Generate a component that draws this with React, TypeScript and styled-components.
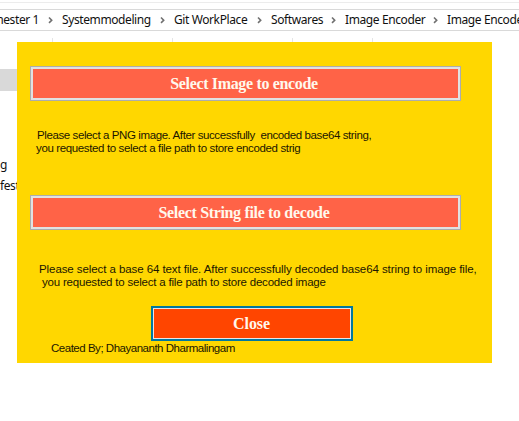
import React from "react";
import styled, { createGlobalStyle } from "styled-components";

const GlobalStyle = createGlobalStyle`
  * { box-sizing: border-box; }
  body { margin: 0; background: #fff; overflow: hidden; }
`;

const Desktop = styled.main`
  position: relative;
  width: 519px;
  height: 421px;
  overflow: hidden;
  background: #fff;
  font-family: "Noto Sans", sans-serif;
  font-size: 12px;
  color: #111;
`;

const RibbonEdge = styled.div`
  height: 9px;
  padding-top: 2px;
  &::before { content: ""; display: block; height: 1px; background: #ececec; }
`;

const AddressBar = styled.nav`
  display: flex;
  align-items: center;
  height: 22px;
  border-top: 1px solid #d9d9d9;
  border-bottom: 1px solid #d9d9d9;
`;

const Crumb = styled.span<{ $width: number; $end?: boolean }>`
  display: flex;
  flex: none;
  justify-content: ${(p) => (p.$end ? "flex-end" : "flex-start")};
  width: ${(p) => p.$width}px;
  line-height: 20px;
  white-space: nowrap;
  letter-spacing: -0.4px;
`;

const Separator = styled.svg`
  flex: none;
  width: 23px;
  height: 10px;
  fill: none;
  stroke: #707070;
  stroke-width: 1.6;
`;

const ColumnHeader = styled.div`
  display: flex;
  height: 11px;
  margin-top: 7px;
  padding-left: 52px;
`;

const Column = styled.div<{ $width: number }>`
  width: ${(p) => p.$width}px;
  border-left: 1px solid #e5e5e5;
`;

const Tree = styled.aside`
  display: flex;
  flex-direction: column;
  width: 30px;
  margin-top: 20px;
`;

const SelectedItem = styled.div`
  height: 22px;
  margin-bottom: 63px;
  background: #d9d9d9;
`;

const TreeItem = styled.div`
  height: 21px;
  line-height: 21px;
  letter-spacing: -0.4px;
`;

const Dialog = styled.section`
  position: absolute;
  left: 17px;
  top: 42px;
  display: flex;
  flex-direction: column;
  width: 475px;
  height: 321px;
  padding: 24px 0 0 13px;
  background: #ffd700;
  font-family: "Liberation Sans", Arial, sans-serif;
  font-size: 11.5px;
  color: #1b1600;
`;

const ActionButton = styled.button<{ $top?: number }>`
  flex: none;
  width: 431px;
  height: 35px;
  margin: ${(p) => p.$top ?? 0}px 0 0;
  padding: 0 3px 0 0;
  border: 1px solid #adadad;
  box-shadow: inset 0 0 0 2px #e1e1e1;
  background: #ff6347;
  color: #fff8ec;
  font: bold 16px/31px "Liberation Serif", "Times New Roman", serif;
  letter-spacing: -0.34px;
`;

const CloseButton = styled(ActionButton)`
  width: 202px;
  margin-left: 121px;
  padding-right: 1px;
  border: 2px solid #0078a0;
  box-shadow: inset 0 0 0 1px #e9e3e3;
  background: #ff4500;
  letter-spacing: -0.1px;
`;

const Note = styled.p<{ $top: number; $left: number }>`
  flex: none;
  display: flex;
  flex-direction: column;
  margin: ${(p) => p.$top}px 0 0 ${(p) => p.$left}px;
  line-height: 13px;
`;

const Line = styled.span<{ $tracking: number; $indent?: number }>`
  padding-left: ${(p) => p.$indent ?? 0}px;
  white-space: pre;
  letter-spacing: ${(p) => p.$tracking}px;
`;

const crumbs = [
  { label: "Systemmodeling", width: 89 },
  { label: "Git WorkPlace", width: 74 },
  { label: "Softwares", width: 51 },
  { label: "Image Encoder", width: 79 },
  { label: "Image Encoder", width: 79 },
];

const Chevron = () => (
  <Separator viewBox="0 0 23 10">
    <path d="M10 2.5l2.7 2.7-2.7 2.7" />
  </Separator>
);

export default function App() {
  return (
    <>
      <GlobalStyle />
      <Desktop>
        <RibbonEdge />
        <AddressBar>
          <Crumb $width={39} $end>mester 1</Crumb>
          {crumbs.map((c, i) => (
            <React.Fragment key={i}>
              <Chevron />
              <Crumb $width={c.width}>{c.label}</Crumb>
            </React.Fragment>
          ))}
        </AddressBar>
        <ColumnHeader>
          <Column $width={120} />
          <Column $width={120} />
          <Column $width={80} />
          <Column $width={80} />
        </ColumnHeader>
        <Tree>
          <SelectedItem />
          <TreeItem>g</TreeItem>
          <TreeItem>fest</TreeItem>
        </Tree>
        <Dialog>
          <ActionButton>Select Image to encode</ActionButton>
          <Note $top={28} $left={6}>
            <Line $tracking={-0.4} $indent={1}>Please select a PNG image. After successfully  encoded base64 string,</Line>
            <Line $tracking={-0.37}>you requested to select a file path to store encoded strig</Line>
          </Note>
          <ActionButton $top={40}>Select String file to decode</ActionButton>
          <Note $top={33} $left={9}>
            <Line $tracking={-0.08}>Please select a base 64 text file. After successfully decoded base64 string to image file,</Line>
            <Line $tracking={-0.2} $indent={3}>you requested to select a file path to store decoded image</Line>
          </Note>
          <CloseButton $top={17}>Close</CloseButton>
          <Note $top={1} $left={21}>
            <Line $tracking={-0.48}>Ceated By; Dhayananth Dharmalingam</Line>
          </Note>
        </Dialog>
      </Desktop>
    </>
  );
}
